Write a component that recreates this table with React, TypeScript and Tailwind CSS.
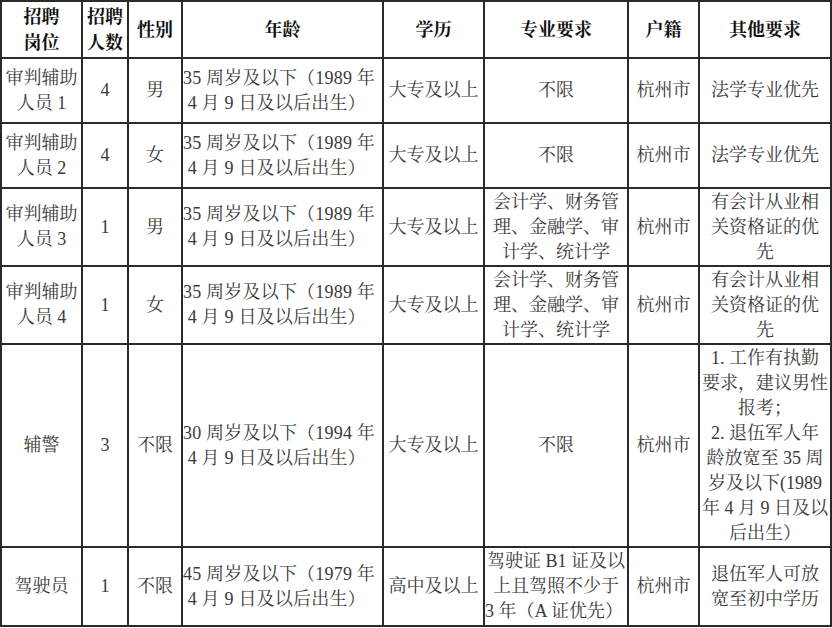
import React from "react";

const F = "font-['Liberation_Serif','Noto_Serif_CJK_SC','Noto_Sans_CJK_SC',serif]";

type Row = {
  h: number;
  pos: React.ReactNode;
  num: string;
  sex: string;
  age: React.ReactNode;
  edu: string;
  major: React.ReactNode;
  hk: string;
  other: React.ReactNode;
};

const age35 = (
  <>
    35 周岁及以下（1989 年
    <br />
    &nbsp;4 月 9 日及以后出生）
  </>
);

const acct = (
  <>
    会计学、财务管
    <br />
    理、金融学、审
    <br />
    计学、统计学
  </>
);
const acctOther = (
  <>
    有会计从业相
    <br />
    关资格证的优
    <br />
    先
  </>
);

const rows: Row[] = [
  { h: 65, pos: <>审判辅助<br />人员 1</>, num: "4", sex: "男", age: age35, edu: "大专及以上", major: "不限", hk: "杭州市", other: "法学专业优先" },
  { h: 65, pos: <>审判辅助<br />人员 2</>, num: "4", sex: "女", age: age35, edu: "大专及以上", major: "不限", hk: "杭州市", other: "法学专业优先" },
  { h: 78, pos: <>审判辅助<br />人员 3</>, num: "1", sex: "男", age: age35, edu: "大专及以上", major: acct, hk: "杭州市", other: acctOther },
  { h: 78, pos: <>审判辅助<br />人员 4</>, num: "1", sex: "女", age: age35, edu: "大专及以上", major: acct, hk: "杭州市", other: acctOther },
  {
    h: 203,
    pos: "辅警",
    num: "3",
    sex: "不限",
    age: (
      <>
        30 周岁及以下（1994 年
        <br />
        &nbsp;4 月 9 日及以后出生）
      </>
    ),
    edu: "大专及以上",
    major: "不限",
    hk: "杭州市",
    other: (
      <>
        1. 工作有执勤
        <br />
        要求，建议男性
        <br />
        报考；
        <br />
        2. 退伍军人年
        <br />
        龄放宽至 35 周
        <br />
        岁及以下(1989
        <br />
        年 4 月 9 日及以
        <br />
        后出生）
      </>
    ),
  },
  {
    h: 79,
    pos: "驾驶员",
    num: "1",
    sex: "不限",
    age: (
      <>
        45 周岁及以下（1979 年
        <br />
        &nbsp;4 月 9 日及以后出生）
      </>
    ),
    edu: "高中及以上",
    major: (
      <>
        驾驶证 B1 证及以
        <br />
        上且驾照不少于
        <br />
        <span className="block text-left">3 年（A 证优先）</span>
      </>
    ),
    hk: "杭州市",
    other: (
      <>
        退伍军人可放
        <br />
        宽至初中学历
      </>
    ),
  },
];

const td = "border-2 border-[#2a2a2a] p-0 align-middle text-center";

export default function App() {
  return (
    <div className={`w-[832px] h-[628px] bg-white overflow-hidden ${F}`}>
      <table className="border-collapse table-fixed w-[830px] text-[18px] leading-[25px] text-[#3a3a3a] whitespace-nowrap">
        <colgroup>
          <col className="w-[81px]" />
          <col className="w-[46px]" />
          <col className="w-[54px]" />
          <col className="w-[201px]" />
          <col className="w-[101px]" />
          <col className="w-[144px]" />
          <col className="w-[71px]" />
          <col className="w-[132px]" />
        </colgroup>
        <thead>
          <tr className="h-[57px] font-bold text-[#111] leading-[26px]">
            <th className={td}>招聘<br />岗位</th>
            <th className={td}>招聘<br />人数</th>
            <th className={td}>性别</th>
            <th className={td}>年龄</th>
            <th className={td}>学历</th>
            <th className={td}>专业要求</th>
            <th className={td}>户籍</th>
            <th className={td}>其他要求</th>
          </tr>
        </thead>
        <tbody>
          {rows.map((r, i) => (
            <tr key={i} style={{ height: r.h }}>
              <td className={td}>{r.pos}</td>
              <td className={td}>{r.num}</td>
              <td className={td}>{r.sex}</td>
              <td className={`${td} !text-left tracking-[0.2px]`}>{r.age}</td>
              <td className={td}>{r.edu}</td>
              <td className={td}>{r.major}</td>
              <td className={td}>{r.hk}</td>
              <td className={td}>{r.other}</td>
            </tr>
          ))}
        </tbody>
      </table>
    </div>
  );
}
